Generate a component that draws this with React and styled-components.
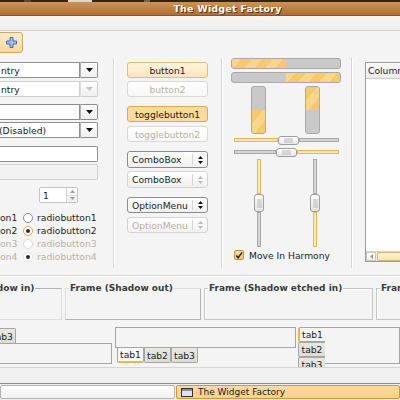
import React from "react"
import styled, { createGlobalStyle, css } from "styled-components"

const GlobalStyle = createGlobalStyle`
  html, body {
    margin: 0;
    padding: 0;
    background: #f4f4f4;
  }
  body {
    font-family: "DejaVu Sans", "Liberation Sans", sans-serif;
    font-size: 9.2px;
    color: #1c1c1c;
  }
  * { box-sizing: border-box; }
`

const DIS = "#b9b2a6"

const Arrow = ({ up, color = "#111" }) => (
  <svg width="7" height="4" viewBox="0 0 7 4">
    <path d={up ? "M0 4h7L3.5 0z" : "M0 0h7L3.5 4z"} fill={color} />
  </svg>
)

const UpDown = ({ color = "#111" }) => (
  <svg width="5" height="8" viewBox="0 0 5 8">
    <path d="M0 3h5L2.5 0z M0 5h5L2.5 8z" fill={color} />
  </svg>
)

const Plus = () => (
  <svg width="11" height="11" viewBox="0 0 11 11">
    <path
      d="M4 .5h3v3.5h3.5v3H7v3.5H4V7H.5V4H4z"
      fill="#9fc0ec"
      stroke="#3f6fb6"
      strokeWidth="1"
      strokeLinejoin="round"
    />
  </svg>
)

const Tick = () => (
  <svg width="9" height="9" viewBox="0 0 9 9">
    <path d="M1.5 4.5l2 2.5L8 1" fill="none" stroke="#222" strokeWidth="1.6" />
  </svg>
)

const WinIcon = () => (
  <svg width="12" height="9" viewBox="0 0 12 9">
    <rect x=".5" y=".5" width="11" height="8" fill="#dfe4ea" stroke="#333" />
    <rect x="1" y="1" width="10" height="2" fill="#7f8fa6" />
  </svg>
)

const App = () => (
  <>
    <GlobalStyle />
    <Screen>
      <Desktop />
      <TitleBar>The Widget Factory</TitleBar>
      <MenuBar />
      <ToolBar>
        <ToolButton>
          <Plus />
        </ToolButton>
      </ToolBar>

      <Main>
        <Column $w={98}>
          <Field $mt={4}>
            <FieldText>ntry</FieldText>
            <DropButton><Arrow /></DropButton>
          </Field>
          <Field $mt={3} $disabled>
            <FieldText $disabled>ntry</FieldText>
            <DropButton $disabled><Arrow color="#c4c4c4" /></DropButton>
          </Field>
          <Field $mt={7}>
            <FieldText />
            <DropButton><Arrow /></DropButton>
          </Field>
          <Field $mt={2} $combo>
            <FieldText $indent={-2}>(Disabled)</FieldText>
            <DropButton><Arrow /></DropButton>
          </Field>
          <Entry $mt={8} />
          <Entry $mt={2} $disabled />
          <Spin>
            <SpinText>1</SpinText>
            <SpinArrows>
              <SpinHalf><Arrow up color="#9a9a9a" /></SpinHalf>
              <SpinHalf><Arrow color="#9a9a9a" /></SpinHalf>
            </SpinArrows>
          </Spin>
          <RadioGroup>
            {[1, 2, 3, 4].map(n => (
              <RadioRow key={n} $disabled={n > 2}>
                <CutLabel>on{n}</CutLabel>
                <Radio $checked={n % 2 === 0} $disabled={n > 2} />
                <span>radiobutton{n}</span>
              </RadioRow>
            ))}
          </RadioGroup>
        </Column>

        <VSep $l={15} $r={13} />

        <Column $w={81}>
          <Button $mt={4} $hot>button1</Button>
          <Button $mt={3} $disabled>button2</Button>
          <Button $mt={9} $pressed>togglebutton1</Button>
          <Button $mt={4} $disabled>togglebutton2</Button>
          <Combo $mt={9} $h={17}>
            <ComboText>ComboBox</ComboText>
            <ComboArrows><UpDown /></ComboArrows>
          </Combo>
          <Combo $mt={3} $h={17} $disabled>
            <ComboText>ComboBox</ComboText>
            <ComboArrows><UpDown color="#bbb" /></ComboArrows>
          </Combo>
          <Combo $mt={9} $h={16} $option>
            <ComboText>OptionMenu</ComboText>
            <ComboArrows><UpDown /></ComboArrows>
          </Combo>
          <Combo $mt={4} $h={16} $option $disabled>
            <ComboText $disabled>OptionMenu</ComboText>
            <ComboArrows><UpDown color="#bbb" /></ComboArrows>
          </Combo>
        </Column>

        <VSep $l={13} $r={9} />

        <Column $w={110}>
          <HProgress>
            <Fill $size={50} />
          </HProgress>
          <HProgress $mt={3} $reverse>
            <Fill $size={50} />
          </HProgress>
          <VProgressRow>
            <VProgress $reverse>
              <Fill $size={50} $vertical />
            </VProgress>
            <VProgress>
              <Fill $size={50} $vertical />
            </VProgress>
          </VProgressRow>
          <HScale $mt={2}>
            <HTrack $w={44} $on />
            <Handle><Grip /></Handle>
            <HTrack $w={40} />
          </HScale>
          <HScale $mt={4} $shift={-2}>
            <HTrack $w={42} />
            <Handle><Grip /></Handle>
            <HTrack $w={42} $on />
          </HScale>
          <VScaleRow>
            <VScale>
              <VTrack $on />
              <VHandle><Grip $v /></VHandle>
              <VTrack />
            </VScale>
            <VScale>
              <VTrack />
              <VHandle><Grip $v /></VHandle>
              <VTrack $on />
            </VScale>
          </VScaleRow>
          <CheckRow>
            <CheckBox><Tick /></CheckBox>
            <span>Move In Harmony</span>
          </CheckRow>
        </Column>

        <VSep $l={10} $r={13} />

        <ListBox>
          <ListHeader>Column</ListHeader>
          <ListBody />
          <HScroll>
            <ScrollStep>
              <svg width="3" height="5" viewBox="0 0 3 5"><path d="M3 0v5L0 2.5z" fill="#999" /></svg>
            </ScrollStep>
            <ScrollThumb />
          </HScroll>
        </ListBox>
      </Main>

      <HSep />

      <FrameRow>
        <Frame $w={128} $shadow="in"><legend>Frame (Shadow in)</legend></Frame>
        <Frame $w={136} $shadow="out"><legend>Frame (Shadow out)</legend></Frame>
        <Frame $w={169} $shadow="etched"><legend>Frame (Shadow etched in)</legend></Frame>
        <Frame $w={110} $shadow="etched"><legend>Frame (Shadow etched out)</legend></Frame>
      </FrameRow>

      <NotebookRow>
        <Notebook $w={178}>
          <TabStrip>
            <Tab $active $side="top">tab1</Tab>
            <Tab $side="top">tab2</Tab>
            <Tab $side="top">tab3</Tab>
          </TabStrip>
          <Page $h={21} />
        </Notebook>

        <Notebook $w={181}>
          <Page $h={21} $open="bottom" />
          <TabStrip $pad={2}>
            <Tab $active $side="bottom">tab1</Tab>
            <Tab $side="bottom">tab2</Tab>
            <Tab $side="bottom">tab3</Tab>
          </TabStrip>
        </Notebook>

        <SideNotebook>
          <SideTabs>
            <Tab $active $side="left">tab1</Tab>
            <Tab $side="left">tab2</Tab>
            <Tab $side="left">tab3</Tab>
          </SideTabs>
          <Page $h={37} $grow $open="left" />
        </SideNotebook>
      </NotebookRow>

      <WindowFooter />

      <Taskbar>
        <TaskButton $w={175} />
        <TaskButton $active>
          <WinIcon />
          <span>The Widget Factory</span>
        </TaskButton>
      </Taskbar>
    </Screen>
  </>
)

const Screen = styled.div`
  width: 400px;
  height: 400px;
  overflow: hidden;
  background: #f4f4f4;
  display: flex;
  flex-direction: column;
`

const Desktop = styled.div`
  height: 2px;
  flex: none;
  background: linear-gradient(
    90deg,
    #2e241b 0 24px,
    #4e4a44 24px 31px,
    #2e241b 31px 68px,
    #d8d8d8 68px 92px,
    #2e241b 92px 144px,
    #6b625a 144px 150px,
    #2e241b 150px
  );
`

const TitleBar = styled.div`
  height: 14px;
  flex: none;
  padding-left: 55px;
  display: flex;
  align-items: center;
  justify-content: center;
  background: linear-gradient(#cf9254, #b46e32);
  border-bottom: 1px solid #8e5426;
  color: #fff;
  font-weight: bold;
  font-size: 9.5px;
  letter-spacing: 0.2px;
  text-shadow: 1px 1px 0 #5a3414;
`

const MenuBar = styled.div`
  height: 15px;
  flex: none;
  background: linear-gradient(#f6f6f6, #ececec);
  border-bottom: 1px solid #d4d4d4;
`

const ToolBar = styled.div`
  height: 24px;
  flex: none;
  padding-top: 1px;
  background: #f4f4f4;
`

const ToolButton = styled.div`
  width: 26px;
  height: 21px;
  margin-left: -3px;
  display: flex;
  align-items: center;
  justify-content: center;
  padding-left: 3px;
  border: 1px solid #d6a862;
  border-radius: 3px;
  background: linear-gradient(#fdebc9, #fbd99c);
`

const Main = styled.div`
  height: 215px;
  flex: none;
  padding-top: 3px;
  display: flex;
  align-items: flex-start;
`

const Column = styled.div`
  width: ${p => p.$w}px;
  flex: none;
  display: flex;
  flex-direction: column;
`

const VSep = styled.div`
  width: 1px;
  height: 210px;
  flex: none;
  margin: 0 ${p => p.$r}px 0 ${p => p.$l}px;
  background: #d6d6d6;
  box-shadow: 1px 0 0 #ffffff;
`

const Field = styled.div`
  height: 16px;
  margin-top: ${p => p.$mt}px;
  display: flex;
`

const FieldText = styled.div`
  flex: 1;
  display: flex;
  align-items: center;
  padding-left: 1px;
  text-indent: ${p => p.$indent || 0}px;
  white-space: nowrap;
  overflow: hidden;
  background: #fff;
  border: 1px solid ${p => (p.$disabled ? "#cfcfcf" : "#8e8e8e")};
  border-left: none;
  color: ${p => (p.$disabled ? "#1c1c1c" : "inherit")};
`

const DropButton = styled.div`
  width: 18px;
  flex: none;
  display: flex;
  align-items: center;
  justify-content: center;
  border: 1px solid ${p => (p.$disabled ? "#cfcfcf" : "#8e8e8e")};
  border-left-color: ${p => (p.$disabled ? "#dcdcdc" : "#b0b0b0")};
  border-radius: 0 2px 2px 0;
  background: linear-gradient(#ffffff, #efefef);
`

const Entry = styled.div`
  height: 16px;
  margin-top: ${p => p.$mt}px;
  background: ${p => (p.$disabled ? "#f2f2f2" : "#fff")};
  border: 1px solid ${p => (p.$disabled ? "#d2d2d2" : "#8e8e8e")};
  border-left: none;
  border-radius: 0 2px 2px 0;
`

const Spin = styled.div`
  width: 39px;
  height: 16px;
  margin: 7px 0 0 39px;
  display: flex;
  background: #fff;
  border: 1px solid #c4c4c4;
  border-radius: 2px;
`

const SpinText = styled.div`
  flex: 1;
  padding-left: 3px;
  display: flex;
  align-items: center;
`

const SpinArrows = styled.div`
  width: 11px;
  display: flex;
  flex-direction: column;
  border-left: 1px solid #d4d4d4;
  background: linear-gradient(#fbfbfb, #efefef);
`

const SpinHalf = styled.div`
  flex: 1;
  display: flex;
  align-items: center;
  justify-content: center;
  & + & { border-top: 1px solid #dcdcdc; }
  svg { width: 5px; height: 3px; }
`

const RadioGroup = styled.div`
  margin-top: 8px;
  display: flex;
  flex-direction: column;
`

const RadioRow = styled.div`
  height: 13px;
  display: flex;
  align-items: center;
  white-space: nowrap;
  color: ${p => (p.$disabled ? DIS : "inherit")};
`

const CutLabel = styled.span`
  width: 23px;
  flex: none;
  overflow: hidden;
`

const Radio = styled.span`
  width: 10px;
  height: 10px;
  flex: none;
  margin-right: 4px;
  border-radius: 50%;
  border: 1px solid ${p => (p.$disabled ? "#dadada" : "#8a8a8a")};
  background: #fff;
  display: flex;
  align-items: center;
  justify-content: center;
  ${p =>
    p.$checked &&
    css`
      border-color: ${p.$disabled ? "#e2e2e2" : "#dca64a"};
      &::after {
        content: "";
        width: 4px;
        height: 4px;
        border-radius: 50%;
        background: #2a2a2a;
      }
    `}
`

const Button = styled.div`
  height: 16px;
  margin-top: ${p => p.$mt}px;
  display: flex;
  align-items: center;
  justify-content: center;
  white-space: nowrap;
  border-radius: 3px;
  border: 1px solid #c4c4c4;
  background: linear-gradient(#ffffff, #f1f1f1);
  ${p =>
    p.$hot &&
    css`
      border-color: #e4bc76;
      background: linear-gradient(#fff5e2, #fde6bc);
    `}
  ${p =>
    p.$pressed &&
    css`
      border-color: #d6a85e;
      background: linear-gradient(#fbd894, #fcdca0);
    `}
  ${p =>
    p.$disabled &&
    css`
      border-color: #d8d8d8;
      color: ${DIS};
      background: linear-gradient(#ffffff, #f6f6f6);
    `}
`

const Combo = styled.div`
  height: ${p => p.$h}px;
  margin-top: ${p => p.$mt}px;
  display: flex;
  border-radius: 3px;
  border: 1px solid ${p => (p.$disabled ? "#d4d4d4" : "#8c8c8c")};
  background: linear-gradient(#ffffff, #f0f0f0);
`

const ComboText = styled.div`
  flex: 1;
  display: flex;
  align-items: center;
  padding-left: 4px;
  white-space: nowrap;
  color: ${p => (p.$disabled ? DIS : "inherit")};
`

const ComboArrows = styled.div`
  width: 15px;
  flex: none;
  margin: 2px 0;
  display: flex;
  align-items: center;
  justify-content: center;
  border-left: 1px solid #d6d6d6;
`

const HProgress = styled.div`
  height: 11px;
  margin-top: ${p => p.$mt || 0}px;
  display: flex;
  justify-content: ${p => (p.$reverse ? "flex-end" : "flex-start")};
  overflow: hidden;
  border: 1px solid #a9a9a9;
  border-radius: 3px;
  background: #c9c9c9;
`

const stripes = css`
  background: repeating-linear-gradient(
    -50deg,
    #f8c96c 0 8px,
    #fbd688 8px 16px
  );
`

const Fill = styled.div`
  ${stripes}
  ${p =>
    p.$vertical
      ? css`
          height: ${p.$size}%;
        `
      : css`
          width: ${p.$size}%;
        `}
`

const VProgressRow = styled.div`
  height: 48px;
  margin-top: 3px;
  padding-left: 20px;
  display: flex;
  gap: 39px;
`

const VProgress = styled.div`
  width: 15px;
  display: flex;
  flex-direction: column;
  justify-content: ${p => (p.$reverse ? "flex-end" : "flex-start")};
  overflow: hidden;
  border: 1px solid #a9a9a9;
  border-radius: 3px;
  background: #c9c9c9;
`

const HScale = styled.div`
  height: 8px;
  margin-top: ${p => p.$mt}px;
  padding-left: 3px;
  display: flex;
  align-items: center;
`

const trackOn = css`
  background: #fde8bd;
  border-color: #eeb552;
`

const HTrack = styled.div`
  width: ${p => p.$w}px;
  height: 4px;
  border: 1px solid #a8a8a8;
  background: #d6d6d6;
  ${p => p.$on && trackOn}
`

const Handle = styled.div`
  width: 21px;
  height: 9px;
  display: flex;
  align-items: center;
  justify-content: center;
  border: 1px solid #9c9c9c;
  border-radius: 3px;
  background: linear-gradient(#ffffff, #e6e6e6);
`

const Grip = styled.div`
  width: ${p => (p.$v ? 5 : 9)}px;
  height: ${p => (p.$v ? 9 : 5)}px;
  background-image: radial-gradient(#b8b8b8 45%, transparent 55%);
  background-size: 2px 2px;
`

const VScaleRow = styled.div`
  height: 88px;
  margin-top: 3px;
  padding-left: 23px;
  display: flex;
  gap: 46px;
`

const VScale = styled.div`
  width: 10px;
  display: flex;
  flex-direction: column;
  align-items: center;
`

const VTrack = styled.div`
  width: 4px;
  flex: 1;
  border: 1px solid #a8a8a8;
  background: #d6d6d6;
  ${p => p.$on && trackOn}
`

const VHandle = styled(Handle)`
  width: 10px;
  height: 18px;
  flex: none;
`

const CheckRow = styled.div`
  height: 10px;
  margin-top: 3px;
  padding-left: 3px;
  display: flex;
  align-items: center;
  gap: 5px;
  white-space: nowrap;
`

const CheckBox = styled.span`
  width: 10px;
  height: 10px;
  display: flex;
  align-items: center;
  justify-content: center;
  border: 1px solid #c09040;
  border-radius: 2px;
  background: linear-gradient(#fbdc9c, #f6c670);
`

const ListBox = styled.div`
  width: 60px;
  height: 200px;
  margin-top: 4px;
  flex: none;
  display: flex;
  flex-direction: column;
  border: 1px solid #9c9c9c;
  background: #fff;
`

const ListHeader = styled.div`
  height: 16px;
  display: flex;
  align-items: center;
  padding-left: 2px;
  border-bottom: 1px solid #cacaca;
  background: linear-gradient(#fafafa, #ececec);
`

const ListBody = styled.div`
  flex: 1;
`

const HScroll = styled.div`
  height: 10px;
  display: flex;
  border-top: 1px solid #d4d4d4;
  background: #ececec;
`

const ScrollStep = styled.div`
  width: 10px;
  display: flex;
  align-items: center;
  justify-content: center;
  border: 1px solid #c8c8c8;
  background: linear-gradient(#fefefe, #eeeeee);
`

const ScrollThumb = styled.div`
  flex: 1;
  margin-left: 1px;
  border: 1px solid #d8b878;
  border-right: none;
  border-radius: 2px 0 0 2px;
  background: linear-gradient(#fff1d6, #fde3b0);
`

const HSep = styled.div`
  height: 1px;
  flex: none;
  margin-top: 5px;
  background: #d6d6d6;
  box-shadow: 0 1px 0 #ffffff;
`

const frameBorder = {
  in: css`
    border-color: #b4b4b4 #dedede #dedede #b4b4b4;
  `,
  out: css`
    border-color: #dedede #b4b4b4 #b4b4b4 #dedede;
  `,
  etched: css`
    border-color: #c6c6c6;
    box-shadow: inset 1px 1px 0 #ffffff;
  `,
}

const FrameRow = styled.div`
  height: 37px;
  flex: none;
  margin: 7px 0 0 -66px;
  display: flex;
  gap: 2px;
`

const Frame = styled.fieldset`
  width: ${p => p.$w}px;
  flex: none;
  height: 37px;
  margin: 0;
  padding: 0;
  border: 1px solid;
  ${p => frameBorder[p.$shadow]}

  legend {
    margin-left: 3px;
    padding: 0 1px;
    font-weight: bold;
    font-size: 9px;
    line-height: 10px;
    color: #3a3a3a;
    white-space: nowrap;
  }

  & + & {
    margin-left: 1px;
  }
`

const NotebookRow = styled.div`
  height: 40px;
  flex: none;
  margin: 7px 0 0 -66px;
  overflow: hidden;
  display: flex;
  gap: 3px;
`

const Notebook = styled.div`
  width: ${p => p.$w}px;
  flex: none;
  display: flex;
  flex-direction: column;
`

const TabStrip = styled.div`
  display: flex;
  padding-left: ${p => p.$pad || 1}px;
`

const tabSide = {
  top: css`
    border-bottom: none;
    border-radius: 2px 2px 0 0;
    margin-top: 1px;
  `,
  bottom: css`
    border-top: none;
    border-radius: 0 0 2px 2px;
  `,
  left: css`
    border-right: none;
    border-radius: 2px 0 0 2px;
  `,
}

const Tab = styled.div`
  width: 27px;
  height: 15px;
  flex: none;
  display: flex;
  align-items: center;
  justify-content: center;
  border: 1px solid #a6a6a6;
  background: linear-gradient(#e9e7e1, #dedcd5);
  ${p => tabSide[p.$side]}
  ${p =>
    p.$active &&
    css`
      background: #f7f7f7;
      ${p.$side === "bottom" && "border-bottom: 2px solid #f0b448;"}
      ${p.$side === "left" && "border-left: 2px solid #f0b448;"}
      ${p.$side === "top" && "border-top: 2px solid #f0b448;"}
    `}
`

const Page = styled.div`
  height: ${p => p.$h}px;
  ${p => p.$grow && "flex: 1;"}
  border: 1px solid #a6a6a6;
  ${p => p.$open === "bottom" && "border-bottom-color: #a6a6a6;"}
  ${p => p.$open === "left" && "border-left: none;"}
  background: #f4f4f4;
`

const SideNotebook = styled.div`
  flex: 1;
  display: flex;
  align-items: flex-start;
  margin-left: -1px;
`

const SideTabs = styled.div`
  width: 27px;
  flex: none;
  display: flex;
  flex-direction: column;
  gap: 0;

  & > div {
    width: 27px;
  }
  & > div + div {
    margin-top: 0;
  }
`

const WindowFooter = styled.div`
  height: 16px;
  flex: none;
  border-top: 1px solid #d6d6d6;
  background: #f0f0f0;
`

const Taskbar = styled.div`
  height: 17px;
  flex: none;
  padding: 1px 0;
  display: flex;
  gap: 1px;
  border-top: 1px solid #8e8e8e;
  background: #eeeeee;
`

const TaskButton = styled.div`
  ${p => (p.$w ? `width: ${p.$w}px; flex: none;` : "flex: 1;")}
  display: flex;
  align-items: center;
  gap: 5px;
  padding-left: 4px;
  font-size: 9px;
  border: 1px solid #b4b4b4;
  border-radius: 2px;
  background: linear-gradient(#ffffff, #f0f0f0);
  ${p =>
    p.$active &&
    css`
      border-color: #c9964c;
      background: linear-gradient(#fbdb9f, #f9d08a);
    `}
`

export default App
